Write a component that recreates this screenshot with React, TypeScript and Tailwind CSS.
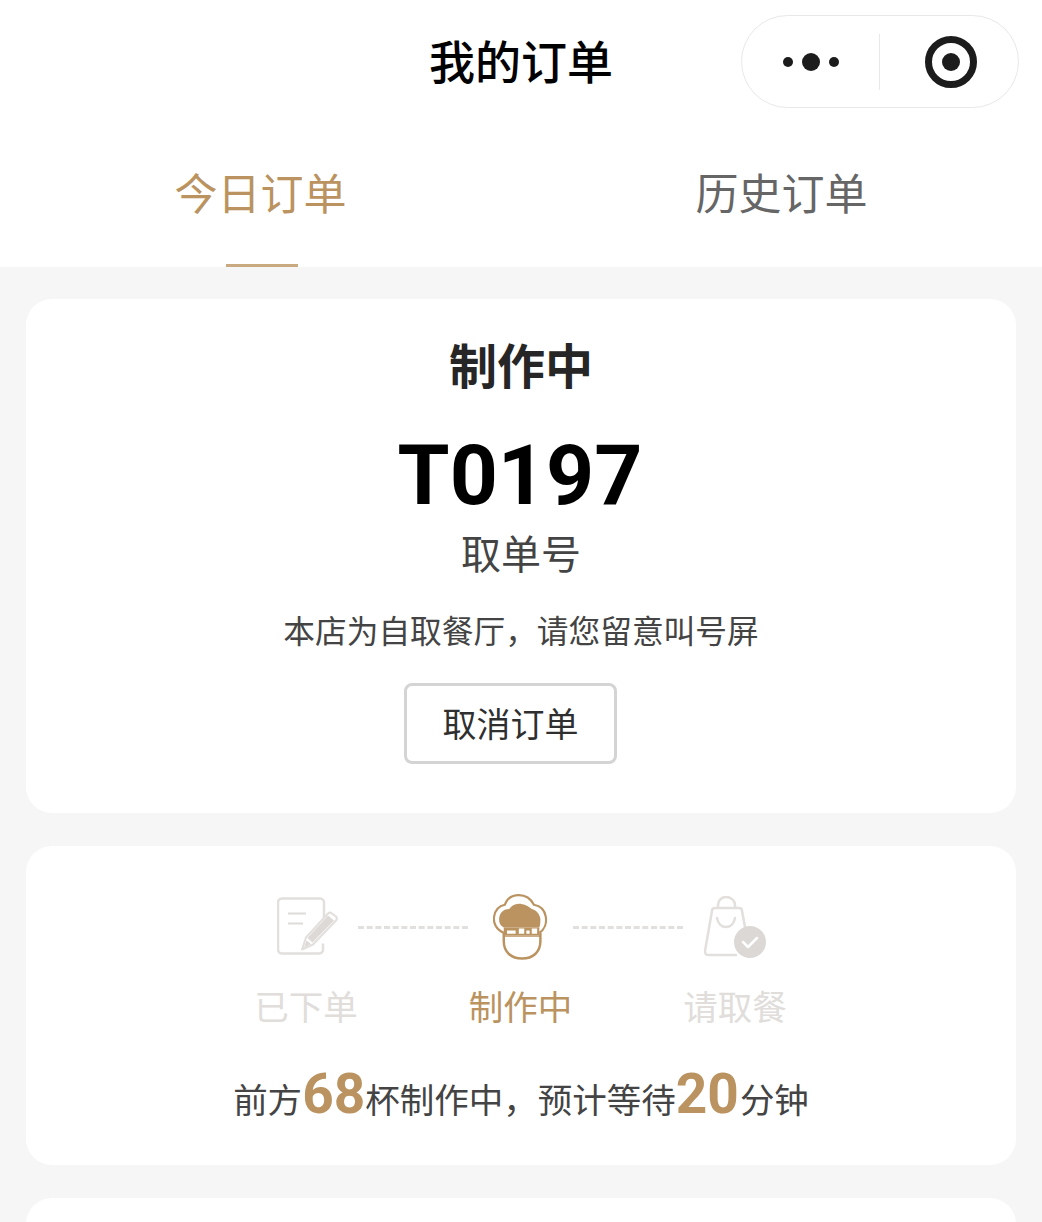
const cjk = "font-['Noto_Sans_CJK_SC','Noto_Sans',sans-serif]";
const digits = "text-[55px] font-bold text-[#ba9360] font-['Roboto',sans-serif]";

function NoteIcon() {
  return (
    <svg width="64" height="62" viewBox="0 -1.5 64 62" fill="none" className="shrink-0">
      <path d="M47 26V5a4 4 0 0 0-4-4H5a4 4 0 0 0-4 4v47a4 4 0 0 0 4 4h37a4 4 0 0 0 4-4v-6" stroke="#e2dfdd" strokeWidth="2.5" />
      <path d="M11 16h18M11 26h15" stroke="#dedbd9" strokeWidth="2" />
      <path d="M25 52l4-12 22-24a3 3 0 0 1 4 0l4 3a3 3 0 0 1 0 4L36 47z" fill="#ffffff" stroke="#e2dfdd" strokeWidth="2" strokeLinejoin="round" />
      <path d="M30.500 40.500l20.500-22.500 6 5-21.500 22z" fill="#dcd9d7" />
      <path d="M27 50l2.500-7 4.500 3.500z" fill="#dcd9d7" />
    </svg>
  );
}

function ChefIcon() {
  return (
    <svg width="56" height="66" viewBox="1 0 52 61.3" fill="none" className="shrink-0">
      <path d="M11 36C4 33 1 27 2 21c1-6 5-10 10-11 2-6 7-9 13-9s11 3 14 9c6 1 10 5 11 11 1 6-1 12-6 15" stroke="#ba9360" strokeWidth="2" />
      <path d="M11 31C7 29 6 25 7 21c1-4 4-7 9-7 2-3 5-5 9-5s9 2 12 5c4 1 7 4 8 9 0 3 0 6-1 8z" fill="#ba9360" />
      <path d="M11 31h33v7H11z" fill="#ba9360" />
      <path d="M14 34h8v3h-8zM25 32h5v5h-5zM32 34h3v3h-3zM37 32h5v5h-5z" fill="#ffffff" />
      <path d="M11 36v8c0 10 7 16 17 16s17-6 17-16v-8" stroke="#ba9360" strokeWidth="2.300" />
      <path d="M11 39h34" stroke="#ba9360" strokeWidth="1.500" />
    </svg>
  );
}

function BagIcon() {
  return (
    <svg width="64" height="62" viewBox="0 0 64 62" fill="none" className="shrink-0">
      <path d="M32 59H5c-3 0-4-1-4-4L8 15c0-2 1-3 3-3h24c2 0 3 1 3 3l3 16" stroke="#e2dfdd" strokeWidth="2.5" strokeLinecap="round" />
      <path d="M14 12V9c0-5 4-8 8-8s9 3 9 8v3" stroke="#e2dfdd" strokeWidth="2.5" />
      <path d="M13 22c1 6 5 9 9 9s8-3 9-9" stroke="#e2dfdd" strokeWidth="2.5" strokeLinecap="round" />
      <circle cx="46" cy="46" r="16" fill="#dcd8d6" />
      <path d="M39 46l5 5 9-9" stroke="#ffffff" strokeWidth="2.5" strokeLinecap="round" strokeLinejoin="round" />
    </svg>
  );
}

function Dashes({ className }: { className: string }) {
  return <div className={`w-[110px] h-0 border-t-[3px] border-dashed border-[#e2e0de] shrink-0 ${className}`} />;
}

function Capsule() {
  return (
    <div className="absolute left-[741px] top-[15px] w-[278px] h-[93px] rounded-full border border-[#e8e8e8] bg-white flex items-center">
      <div className="w-[137px] flex items-center justify-center gap-[9px]">
        <span className="w-[10px] h-[10px] rounded-full bg-[#1c1c1c]" />
        <span className="w-[18px] h-[18px] rounded-full bg-[#1c1c1c]" />
        <span className="w-[10px] h-[10px] rounded-full bg-[#1c1c1c]" />
      </div>
      <div className="w-px h-[56px] bg-[#e8e8e8]" />
      <div className="flex-1 flex items-center justify-center pl-[4px]">
        <div className="w-[52px] h-[52px] rounded-full border-[7px] border-[#1c1c1c] flex items-center justify-center">
          <span className="w-[18px] h-[18px] rounded-full bg-[#1c1c1c]" />
        </div>
      </div>
    </div>
  );
}

export default function App() {
  return (
    <div className={`w-[1042px] h-[1222px] overflow-hidden bg-[#f6f6f6] ${cjk}`}>
      <header className="relative bg-white h-[122px] flex items-center justify-center pb-[4px]">
        <h1 className="text-[46px] leading-[60px] font-medium text-black">我的订单</h1>
        <Capsule />
      </header>

      <nav className="bg-white h-[145px] grid grid-cols-2">
        <div className="flex flex-col items-center">
          <span className="text-[43px] leading-[56px] mt-[41px] text-[#ba9360]">今日订单</span>
          <span className="w-[72px] h-[3px] bg-[#c9a97f] mt-auto ml-[2px]" />
        </div>
        <div className="flex flex-col items-center">
          <span className="text-[43px] leading-[56px] mt-[41px] text-[#666666]">历史订单</span>
        </div>
      </nav>

      <main className="px-[26px] pt-[32px] flex flex-col gap-[33px]">
        <section className="h-[514px] rounded-[26px] bg-white flex flex-col items-center pt-[32px]">
          <h2 className="text-[48px] leading-[64px] font-bold text-[#262626]">制作中</h2>
          <div className="text-[84px] leading-[100px] font-bold text-black mt-[31px] mr-[2px] font-['Roboto',sans-serif]">T0197</div>
          <div className="text-[40px] leading-[52px] text-[#444444]">取单号</div>
          <p className="text-[31.7px] leading-[44px] text-[#444444] mt-[29px]">本店为自取餐厅，请您留意叫号屏</p>
          <button className="w-[213px] h-[81px] mt-[32px] mr-[21px] rounded-[8px] border-[3px] border-[#d4d4d4] text-[34px] font-normal text-[#2f2f2f] bg-white">
            <span className="block -mt-[2px]">取消订单</span>
          </button>
        </section>

        <section className="h-[319px] rounded-[26px] bg-white flex flex-col items-center pt-[48px]">
          <div className="flex items-center h-[66px] w-[488px]">
            <NoteIcon />
            <Dashes className="ml-[17px] mr-[25px]" />
            <ChefIcon />
            <Dashes className="ml-[24px] mr-[21px]" />
            <BagIcon />
          </div>
          <div className="flex justify-center gap-[111px] mt-[22px] text-[34.5px] leading-[46px] text-[#e0dddb] mr-[1px]">
            <span>已下单</span>
            <span className="text-[#ba9360]">制作中</span>
            <span>请取餐</span>
          </div>
          <p className="flex items-baseline text-[34.5px] leading-[60px] text-[#444444] mt-[36px]">
            前方<span className={digits}>68</span>杯制作中，预计等待<span className={`${digits} mr-[1px]`}>20</span>分钟
          </p>
        </section>

        <section className="h-[200px] rounded-[26px] bg-white" />
      </main>
    </div>
  );
}
